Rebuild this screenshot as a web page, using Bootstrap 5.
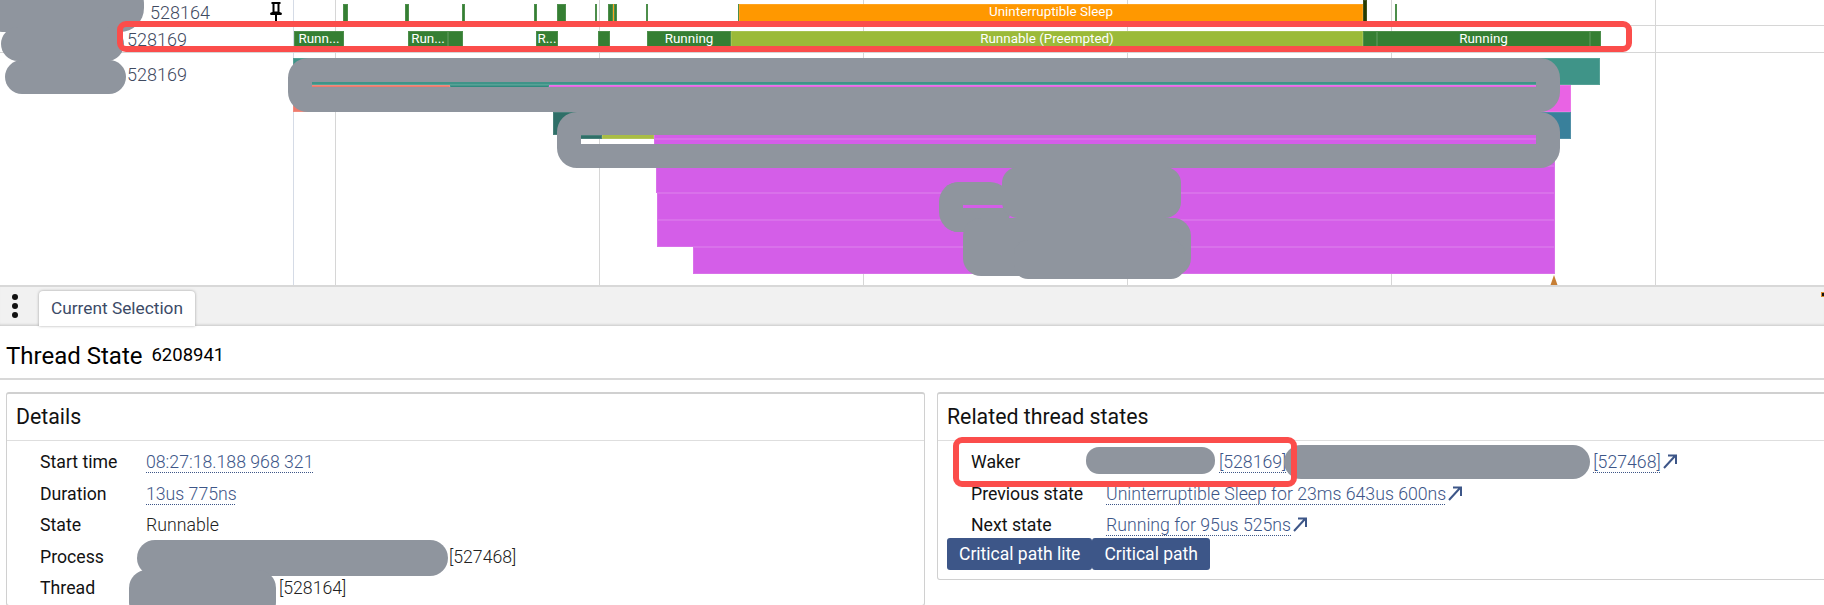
<!DOCTYPE html>
<html>

<head>
  <link href="https://cdn.jsdelivr.net/npm/bootstrap@5.3.2/dist/css/bootstrap.min.css" rel="stylesheet"
    type="text/css" />
  <script src="https://cdn.jsdelivr.net/npm/bootstrap@5.3.2/dist/js/bootstrap.bundle.min.js"></script>
  <style>
    html, body { height: 605px; overflow: hidden; }
    body { font-family: Roboto, "Liberation Sans", sans-serif; font-size: 17.7px; color: #121212; position: relative; }

    /* timeline canvas */
    .tl-canvas { position: relative; height: 285px; overflow: hidden; }
    .tl-item { position: absolute; }
    .tl-grid { background: #d6d6d6; }
    .tl-grid-first { background: #d5dbe6; }
    .tl-seg { color: #fff; font-size: 13.4px; font-weight: 400; line-height: 16px; text-align: center; overflow: hidden; white-space: nowrap; box-shadow: inset 0 0 0 1px rgba(255,255,255,.12); }
    .tl-tid { font-size: 18px; font-weight: 300; color: #3f4a61; line-height: 24px; }

    /* paint-over marks on the screenshot */
    .blur-mark { position: absolute; background: #8f959e; border-radius: 18px; }
    .blur-ring { position: absolute; border-style: solid; border-color: #8f959e; border-radius: 20px; }
    .hl-box { position: absolute; border: 6px solid #fb4d4b; border-radius: 9px; }
    .edge-dot { position: absolute; background: #111; border: 1px solid #d88a2a; }

    /* tab bar */
    .tab-strip { height: 41px; background: #f1f1f1; border-top: 2px solid #d8d8d8; box-shadow: inset 0 -3px 3px -2px rgba(0,0,0,.18); }
    .menu-dots { width: 29px; padding-top: 7px; gap: 3px; }
    .menu-dots span { width: 6px; height: 6px; background: #111; border-radius: 50%; }
    .tab-current { width: 156px; height: 35px; margin: 4px 0 0 10px; background: #fff; border-radius: 4px 4px 0 0; color: #3c4b67; font-size: 17.3px; box-shadow: 0 0 3px rgba(0,0,0,.35); }

    .sel-title { height: 54px; border-bottom: 2px solid #d8d8d8; padding: 8px 0 0 6px; }
    .sel-title h2 { font-size: 24px; font-weight: 400; margin: 0; color: #000; }
    .sel-title small { font-size: 18.5px; color: #000; margin-left: 9px; }

    .panel-wrap { padding: 12px 0 0 6px; gap: 12px; width: 1880px; }
    .panel { width: 919px; flex: none; border-radius: 3px; border-color: #d0d0d0; border-width: 2px 1px 1px 1px; }
    .panel-head { height: 47px; padding-left: 9px; border-bottom: 1px solid #dedede; font-size: 21.3px; color: #121212; }
    .panel-rows { padding: 6px 0 0 33px; }
    .info-row { height: 31.5px; }
    .info-key { width: 106px; flex: none; }
    .info-val { font-weight: 300; color: #222; }
    .info-val a { color: #3d5688; text-decoration: underline dotted; text-underline-offset: 4px; text-decoration-thickness: 1px; }
    .rel-rows .info-key { width: 135px; }
    .gap-fill { display: inline-block; }
    .panel-btns { margin: -4px 0 9px 9px; }
    .btn-path { background: #3d5688; color: #fff; font-size: 17.5px; font-weight: 400; height: 32px; padding: 0 12px; line-height: 32px; border: 0; border-radius: 3px; }
    .btn-path:hover { background: #3d5688; color: #fff; }
    .out-arrow { width: 15px; height: 16px; margin-left: 2px; vertical-align: -1px; }
  </style>
</head>

<body>

  <section id="timeline" class="tl-canvas"></section>

  <div class="tab-strip d-flex">
    <div class="menu-dots d-flex flex-column align-items-center"><span></span><span></span><span></span></div>
    <div class="tab-current d-flex align-items-center justify-content-center">Current Selection</div>
  </div>

  <div class="sel-title d-flex align-items-center">
    <h2>Thread State</h2><small>6208941</small>
  </div>

  <div class="panel-wrap d-flex align-items-start">
    <div class="card panel">
      <div class="panel-head d-flex align-items-center">Details</div>
      <div class="panel-rows">
        <div class="info-row d-flex align-items-center"><div class="info-key">Start time</div><div class="info-val"><a href="#">08:27:18.188 968 321</a></div></div>
        <div class="info-row d-flex align-items-center"><div class="info-key">Duration</div><div class="info-val"><a href="#">13us 775ns</a></div></div>
        <div class="info-row d-flex align-items-center"><div class="info-key">State</div><div class="info-val">Runnable</div></div>
        <div class="info-row d-flex align-items-center"><div class="info-key">Process</div><div class="info-val"><span class="gap-fill blank-proc"></span>[527468]</div></div>
        <div class="info-row d-flex align-items-center"><div class="info-key">Thread</div><div class="info-val"><span class="gap-fill blank-thread"></span>[528164]</div></div>
      </div>
    </div>

    <div class="card panel">
      <div class="panel-head d-flex align-items-center">Related thread states</div>
      <div class="panel-rows rel-rows">
        <div class="info-row d-flex align-items-center"><div class="info-key">Waker</div><div class="info-val"><a href="#"><span class="gap-fill blank-waker"></span>[528169]<span class="gap-fill blank-wproc"></span>[527468]<svg class="out-arrow" viewBox="0 0 15 16"><path d="M1 15 12 3M5 2.500h8V11" fill="none" stroke="#3d5688" stroke-width="2"/></svg></a></div></div>
        <div class="info-row d-flex align-items-center"><div class="info-key">Previous state</div><div class="info-val"><a href="#">Uninterruptible Sleep for 23ms 643us 600ns<svg class="out-arrow" viewBox="0 0 15 16"><path d="M1 15 12 3M5 2.500h8V11" fill="none" stroke="#3d5688" stroke-width="2"/></svg></a></div></div>
        <div class="info-row d-flex align-items-center"><div class="info-key">Next state</div><div class="info-val"><a href="#">Running for 95us 525ns<svg class="out-arrow" viewBox="0 0 15 16"><path d="M1 15 12 3M5 2.500h8V11" fill="none" stroke="#3d5688" stroke-width="2"/></svg></a></div></div>
      </div>
      <div class="d-flex panel-btns">
        <button class="btn btn-path">Critical path lite</button>
        <button class="btn btn-path">Critical path</button>
      </div>
    </div>
  </div>

  <div id="overlays"></div>

  <script>
    const GREEN = '#357f33', OLIVE = '#9bba38', ORANGE = '#ff9800'
    const MAGENTA = '#d45ee8', TEAL = '#3f9488'

    // x1, x2, y1, y2, colour, label
    const segs = [
      // row 1 (thread 528164)
      [343, 348, 4, 22, GREEN], [405, 409, 4, 22, GREEN], [462, 465, 4, 22, GREEN], [534, 537, 4, 22, GREEN],
      [557, 566, 4, 22, GREEN], [595, 597, 4, 22, GREEN], [608, 613, 4, 22, GREEN], [613, 614, 4, 22, ORANGE],
      [614, 617, 4, 22, GREEN], [646, 648, 4, 22, GREEN], [738, 739, 4, 22, GREEN],
      [739, 1363, 4, 22, ORANGE, 'Uninterruptible Sleep'], [1363, 1367, 0, 22, '#263b00'], [1395, 1397, 4, 22, GREEN],
      // row 2 (thread 528169)
      [294, 344, 31, 47, GREEN, 'Runn...'], [408, 448, 31, 47, GREEN, 'Run...'], [448, 463, 31, 47, GREEN],
      [536, 558, 31, 47, GREEN, 'R...'], [598, 610, 31, 47, GREEN], [647, 731, 31, 47, GREEN, 'Running'],
      [731, 1363, 31, 47, OLIVE, 'Runnable (Preempted)'], [1363, 1377, 31, 47, GREEN],
      [1377, 1590, 31, 47, GREEN, 'Running'], [1590, 1601, 31, 47, GREEN],
      // flame rows
      [293, 1600, 58, 85, TEAL],
      [293, 450, 85, 112, '#ee7a6c'], [450, 549, 85, 112, '#2f8a7e'], [549, 1571, 85, 112, '#e963e4'],
      [553, 602, 112, 135, '#2f6f68'], [602, 654, 112, 139, '#a9bd45'], [654, 1540, 112, 139, MAGENTA], [1540, 1571, 112, 139, '#39809b'],
      [580, 602, 135, 139, '#2f6f68'],
      [654, 1555, 139, 166, MAGENTA],
      [656, 1555, 166, 193, MAGENTA], [657, 1555, 193, 220, MAGENTA], [657, 1555, 220, 247, MAGENTA], [693, 1555, 247, 274, MAGENTA]
    ]

    const gridXs = [335, 599, 863, 1127, 1391, 1655]
    const timeline = document.querySelector('#timeline')

    function place(parent, className, x, y, w, h, text) {
      const el = document.createElement('div')
      el.className = className
      el.style.left = x + 'px'
      el.style.top = y + 'px'
      if (w !== null) el.style.width = w + 'px'
      if (h !== null) el.style.height = h + 'px'
      if (text) el.textContent = text
      parent.appendChild(el)
      return el
    }

    place(timeline, 'tl-item tl-grid-first', 293, 0, 1, 285)
    for (let i = 0; i < gridXs.length; i++) {
      place(timeline, 'tl-item tl-grid', gridXs[i], 0, 1, 285)
    }
    place(timeline, 'tl-item tl-grid', 0, 25, 1824, 1)
    place(timeline, 'tl-item tl-grid', 0, 52, 1824, 1)

    for (let i = 0; i < segs.length; i++) {
      const s = segs[i]
      const el = place(timeline, 'tl-item tl-seg', s[0], s[2], s[1] - s[0], s[3] - s[2], s[5])
      el.style.background = s[4]
    }
    place(timeline, 'tl-item tl-tid', 150, 1, null, null, '528164')
    place(timeline, 'tl-item tl-tid', 127, 28, null, null, '528169')
    place(timeline, 'tl-item tl-tid', 127, 63, null, null, '528169')

    // pin
    const pin = place(timeline, 'tl-item', 269, 2, 14, 20)
    pin.innerHTML = '<svg class="d-block" width="14" height="20" viewBox="0 0 14 20"><path d="M2.500 1h9M4.500 1.500v9M9.500 1.500v9M1.500 12h11L9.500 10.500h-5zM7 12v8" fill="none" stroke="#000" stroke-width="2"/></svg>'

    // caret on the timeline
    const caret = place(timeline, 'tl-item', 1549, 275, 10, 10)
    caret.innerHTML = '<svg class="d-block" width="10" height="10" viewBox="0 0 10 10"><path d="M5 0 8.500 10h-7z" fill="#c77f35"/></svg>'

    const overlays = document.querySelector('#overlays')

    // x1, y1, x2, y2, radius
    const marks = [
      [-20, -20, 144, 32, 24], [1, 27, 124, 61, 18], [5, 60, 126, 94, 18],
      [1002, 167, 1181, 218, 16], [963, 218, 1191, 276, 18], [1014, 240, 1185, 279, 14],
      [137, 540, 448, 576, 18], [129, 570, 276, 620, 18],
      [1086, 447, 1215, 474, 13], [1284, 445, 1590, 479, 17]
    ]
    // x1, y1, x2, y2, top, right, bottom, left (strokes that left a slit open)
    const rings = [
      [288, 58, 1560, 112, 24, 24, 25, 24],
      [557, 112, 1560, 168, 23, 24, 24, 24],
      [939, 182, 1010, 232, 23, 0, 24, 24]
    ]

    for (let i = 0; i < rings.length; i++) {
      const r = rings[i]
      const el = place(overlays, 'blur-ring', r[0], r[1], r[2] - r[0], r[3] - r[1])
      el.style.borderWidth = `${r[4]}px ${r[5]}px ${r[6]}px ${r[7]}px`
    }
    for (let i = 0; i < marks.length; i++) {
      const m = marks[i]
      const el = place(overlays, 'blur-mark', m[0], m[1], m[2] - m[0], m[3] - m[1])
      el.style.borderRadius = m[4] + 'px'
    }

    // red highlight boxes
    place(overlays, 'hl-box', 117, 21, 1515, 31)
    place(overlays, 'hl-box', 953, 437, 344, 50)

    place(overlays, 'edge-dot', 1821, 292, 4, 5)

    // gaps in the value text that the paint covers
    document.querySelector('.blank-proc').style.width = '303px'
    document.querySelector('.blank-thread').style.width = '133px'
    document.querySelector('.blank-waker').style.width = '113px'
    document.querySelector('.blank-wproc').style.width = '307px'
  </script>
</body>

</html>
